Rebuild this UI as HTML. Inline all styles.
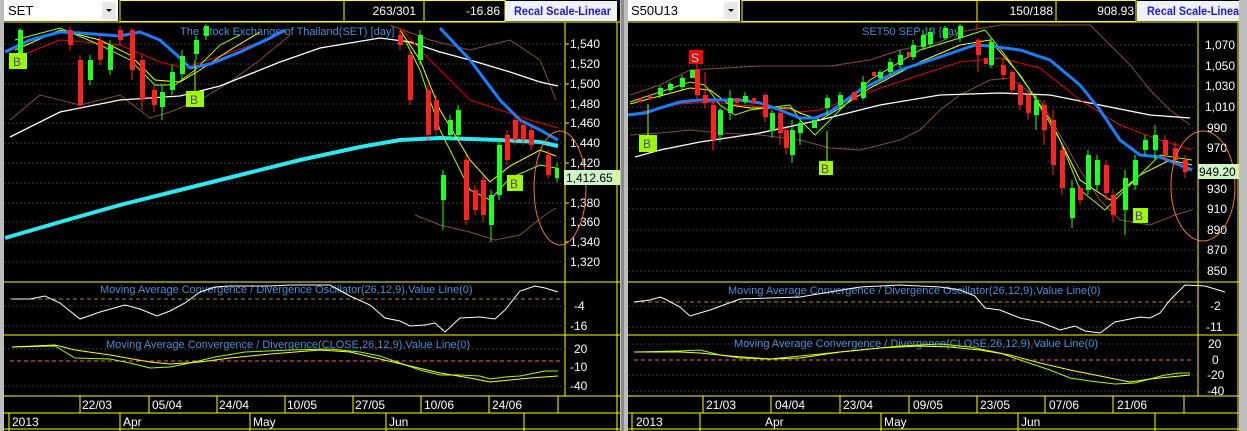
<!DOCTYPE html>
<html><head><meta charset="utf-8"><style>
html,body{margin:0;padding:0;background:#c0c0c0;width:1247px;height:431px;overflow:hidden}
svg{display:block}
text{font-family:"Liberation Sans",sans-serif}
</style></head><body>
<svg width="1247" height="431" viewBox="0 0 1247 431" xmlns="http://www.w3.org/2000/svg">
<rect x="0" y="0" width="1247" height="431" fill="#bdbdbd"/>
<rect x="4" y="0" width="616" height="431" fill="#000"/>
<rect x="628" y="0" width="611" height="431" fill="#000"/>
<rect x="621" y="0" width="3" height="431" fill="#8a8a8a"/>

<!-- ============ LEFT PANEL ============ -->
<g>
<rect x="4" y="0" width="114" height="21" fill="#fff"/>
<text x="8" y="15" font-size="13" fill="#000">SET</text>
<rect x="102" y="2" width="14" height="17" fill="#e8e8e8"/>
<path d="M106 9h6l-3 3z" fill="#000"/>
<rect x="120" y="0.5" width="385" height="21" fill="none" stroke="#ff0" stroke-width="1"/>
<line x1="344" y1="0" x2="344" y2="21" stroke="#ff0"/>
<line x1="424" y1="0" x2="424" y2="21" stroke="#ff0"/>
<text x="416" y="15" font-size="12" fill="#fff" text-anchor="end">263/301</text>
<text x="500" y="15" font-size="12" fill="#fff" text-anchor="end">-16.86</text>
<rect x="505" y="1" width="112" height="20" fill="#f0f0f8"/>
<text x="514" y="15" font-size="12" font-weight="bold" fill="#1a1adf" textLength="97" lengthAdjust="spacingAndGlyphs">Recal Scale-Linear</text>
<line x1="4" y1="22" x2="620" y2="22" stroke="#ff0"/>
<line x1="565" y1="22" x2="565" y2="396" stroke="#ff0"/>
<g stroke="#3a3a3a" stroke-dasharray="2,2">
<line x1="4" y1="44" x2="565" y2="44"/><line x1="4" y1="64" x2="565" y2="64"/><line x1="4" y1="84" x2="565" y2="84"/><line x1="4" y1="104" x2="565" y2="104"/><line x1="4" y1="123" x2="565" y2="123"/><line x1="4" y1="143" x2="565" y2="143"/><line x1="4" y1="163" x2="565" y2="163"/><line x1="4" y1="183" x2="565" y2="183"/><line x1="4" y1="203" x2="565" y2="203"/><line x1="4" y1="222" x2="565" y2="222"/><line x1="4" y1="242" x2="565" y2="242"/><line x1="4" y1="262" x2="565" y2="262"/>
</g>
<g font-size="12" fill="#fff">
<text x="570" y="48">1,540</text><text x="570" y="68">1,520</text><text x="570" y="88">1,500</text><text x="570" y="108">1,480</text><text x="570" y="127">1,460</text><text x="570" y="147">1,440</text><text x="570" y="167">1,420</text><text x="570" y="207">1,380</text><text x="570" y="226">1,360</text><text x="570" y="246">1,340</text><text x="570" y="266">1,320</text>
</g>
<g stroke="#ff0"><line x1="565" y1="44" x2="569" y2="44"/><line x1="565" y1="84" x2="569" y2="84"/><line x1="565" y1="123" x2="569" y2="123"/><line x1="565" y1="163" x2="569" y2="163"/><line x1="565" y1="203" x2="569" y2="203"/><line x1="565" y1="242" x2="569" y2="242"/></g>
<text x="180" y="35" font-size="11" fill="#4a8fd8">The Stock Exchange of Thailand(SET) [day]</text>
<g fill="none">
<polyline stroke="#8b4a3a" points="10,120 40,95 80,105 120,95 150,118 170,112 200,100 230,82 260,60 290,35"/>
<polyline stroke="#8b4a3a" points="390,25 430,40 470,50 510,40 540,60 556,100"/>
<polyline stroke="#8b4a3a" points="415,215 440,225 470,232 495,240 520,235 545,215 556,208"/>
<polyline stroke="#fff" stroke-width="1.3" points="10,137 60,112 120,100 180,96 220,86 280,62 320,48 380,38 410,42 440,52 470,60 510,72 540,82 558,86"/>
<polyline stroke="#2ee8f0" stroke-width="4" points="5,238 60,222 120,205 180,190 240,175 300,160 360,147 400,140 440,138 500,140 540,142 558,146"/>
<polyline stroke="#e00" points="10,60 60,40 120,45 160,62 185,68 220,56 260,42 285,32"/>
<polyline stroke="#e00" points="400,28 430,60 470,100 500,110 530,120 558,128"/>
<polyline stroke="#ff0" points="15,50 60,30 100,40 130,55 155,80 180,82 200,70 230,50 260,32"/>
<polyline stroke="#ff0" points="400,30 420,60 440,110 470,160 490,182 510,166 540,150 556,156"/>
<polyline stroke="#9f0" points="15,40 60,28 100,45 130,60 155,85 175,85 195,70 220,45 240,35"/>
<polyline stroke="#9f0" points="405,40 420,70 440,130 470,190 490,200 510,178 540,165 556,168"/>
<polyline stroke="#1a7fff" stroke-width="3" points="5,52 30,40 60,32 80,33 120,36 140,32 160,40 180,58 190,68 210,64 240,52 270,38 285,30"/>
<polyline stroke="#1a7fff" stroke-width="3" points="440,28 470,60 500,100 520,120 540,130 558,140"/>
</g>
<g stroke-width="1">
<line x1="20" y1="28" x2="20" y2="62" stroke="#2f2"/><rect x="18" y="30" width="5" height="28" fill="#2f2"/>
<line x1="70" y1="26" x2="70" y2="50" stroke="#f22"/><rect x="68" y="30" width="5" height="15" fill="#f22"/>
<line x1="80" y1="55" x2="80" y2="110" stroke="#f22"/><rect x="78" y="60" width="5" height="45" fill="#f22"/>
<line x1="90" y1="55" x2="90" y2="85" stroke="#2f2"/><rect x="88" y="60" width="5" height="20" fill="#2f2"/>
<line x1="100" y1="35" x2="100" y2="65" stroke="#f22"/><rect x="98" y="40" width="5" height="20" fill="#f22"/>
<line x1="110" y1="40" x2="110" y2="75" stroke="#2f2"/><rect x="108" y="45" width="5" height="25" fill="#2f2"/>
<line x1="120" y1="26" x2="120" y2="45" stroke="#f22"/><rect x="118" y="30" width="5" height="10" fill="#f22"/>
<line x1="132" y1="28" x2="132" y2="80" stroke="#f22"/><rect x="130" y="30" width="5" height="40" fill="#f22"/>
<line x1="142" y1="55" x2="142" y2="110" stroke="#f22"/><rect x="140" y="60" width="5" height="40" fill="#f22"/>
<line x1="154" y1="85" x2="154" y2="112" stroke="#f22"/><rect x="152" y="90" width="5" height="15" fill="#f22"/>
<line x1="162" y1="85" x2="162" y2="120" stroke="#2f2"/><rect x="160" y="92" width="5" height="15" fill="#2f2"/>
<line x1="172" y1="65" x2="172" y2="95" stroke="#2f2"/><rect x="170" y="72" width="5" height="18" fill="#2f2"/>
<line x1="182" y1="50" x2="182" y2="80" stroke="#2f2"/><rect x="180" y="56" width="5" height="18" fill="#2f2"/>
<line x1="196" y1="36" x2="196" y2="60" stroke="#2f2"/><rect x="194" y="40" width="5" height="14" fill="#2f2"/>
<line x1="206" y1="24" x2="206" y2="40" stroke="#2f2"/><rect x="204" y="26" width="5" height="10" fill="#2f2"/>
<line x1="400" y1="30" x2="400" y2="50" stroke="#f22"/><rect x="398" y="35" width="5" height="10" fill="#f22"/>
<line x1="410" y1="50" x2="410" y2="105" stroke="#f22"/><rect x="408" y="55" width="5" height="45" fill="#f22"/>
<line x1="420" y1="30" x2="420" y2="65" stroke="#2f2"/><rect x="418" y="35" width="5" height="25" fill="#2f2"/>
<line x1="428" y1="85" x2="428" y2="140" stroke="#f22"/><rect x="426" y="90" width="5" height="45" fill="#f22"/>
<line x1="436" y1="95" x2="436" y2="135" stroke="#f22"/><rect x="434" y="100" width="5" height="30" fill="#f22"/>
<line x1="443" y1="170" x2="443" y2="230" stroke="#2f2"/><rect x="441" y="175" width="5" height="25" fill="#2f2"/>
<line x1="450" y1="115" x2="450" y2="140" stroke="#2f2"/><rect x="448" y="120" width="5" height="15" fill="#2f2"/>
<line x1="458" y1="105" x2="458" y2="140" stroke="#2f2"/><rect x="456" y="110" width="5" height="25" fill="#2f2"/>
<line x1="466" y1="155" x2="466" y2="225" stroke="#f22"/><rect x="464" y="160" width="5" height="60" fill="#f22"/>
<line x1="475" y1="185" x2="475" y2="215" stroke="#f22"/><rect x="473" y="190" width="5" height="20" fill="#f22"/>
<line x1="483" y1="175" x2="483" y2="222" stroke="#f22"/><rect x="481" y="180" width="5" height="35" fill="#f22"/>
<line x1="491" y1="190" x2="491" y2="242" stroke="#2f2"/><rect x="489" y="195" width="5" height="30" fill="#2f2"/>
<line x1="499" y1="140" x2="499" y2="200" stroke="#2f2"/><rect x="497" y="145" width="5" height="50" fill="#2f2"/>
<line x1="507" y1="130" x2="507" y2="165" stroke="#f22"/><rect x="505" y="135" width="5" height="25" fill="#f22"/>
<line x1="515" y1="115" x2="515" y2="145" stroke="#f22"/><rect x="513" y="120" width="5" height="20" fill="#f22"/>
<line x1="523" y1="120" x2="523" y2="145" stroke="#f22"/><rect x="521" y="125" width="5" height="15" fill="#f22"/>
<line x1="531" y1="125" x2="531" y2="150" stroke="#f22"/><rect x="529" y="130" width="5" height="15" fill="#f22"/>
<line x1="548" y1="150" x2="548" y2="178" stroke="#f22"/><rect x="546" y="155" width="5" height="20" fill="#f22"/>
<line x1="557" y1="163" x2="557" y2="182" stroke="#2f2"/><rect x="555" y="168" width="4" height="10" fill="#2f2"/>
</g>
<line x1="20" y1="52" x2="20" y2="56" stroke="#9f0"/>
<rect x="9" y="53" width="18" height="16" fill="#9f0"/><text x="13" y="66" font-size="12" fill="#6a2fc0">B</text>
<line x1="195" y1="60" x2="195" y2="92" stroke="#9f0"/>
<rect x="186" y="91" width="18" height="16" fill="#9f0"/><text x="190" y="104" font-size="12" fill="#6a2fc0">B</text>
<rect x="507" y="175" width="16" height="16" fill="#9f0"/><text x="510" y="188" font-size="12" fill="#6a2fc0">B</text>
<ellipse cx="560" cy="188" rx="26" ry="57" fill="none" stroke="#f07a20"/>
<rect x="564" y="170" width="56" height="15" fill="#ccf5c8"/>
<text x="566" y="182" font-size="12" fill="#000">1,412.65</text>

<line x1="4" y1="282" x2="620" y2="282" stroke="#ff0"/>
<g stroke="#3a3a3a" stroke-dasharray="2,2"><line x1="4" y1="306" x2="565" y2="306"/><line x1="4" y1="326" x2="565" y2="326"/><line x1="4" y1="349" x2="565" y2="349"/><line x1="4" y1="386" x2="565" y2="386"/></g>
<line x1="10" y1="299" x2="560" y2="299" stroke="#a09020" stroke-dasharray="4,3"/>
<text x="100" y="293" font-size="11" fill="#4a8fd8">Moving Average Convergence / Divergence Oscillator(26,12,9),Value Line(0)</text>
<polyline fill="none" stroke="#fff" points="12,299 30,299 45,296 60,303 80,319 100,312 125,305 140,309 157,316 170,311 185,303 200,292 215,287 230,286 250,286 270,286 290,285 310,285 330,285 350,296 370,305 385,318 400,321 410,326 425,325 435,323 445,332 460,318 480,317 495,319 505,310 520,291 535,286 545,288 558,292"/>
<line x1="4" y1="335" x2="620" y2="335" stroke="#ff0"/>
<text x="106" y="348" font-size="11" fill="#4a8fd8">Moving Average Convergence / Divergence(CLOSE,26,12,9),Value Line(0)</text>
<line x1="10" y1="361" x2="560" y2="361" stroke="#ff6060" stroke-dasharray="4,3"/>
<polyline fill="none" stroke="#9f0" points="12,347 55,346 75,358 110,359 130,363 150,368 170,367 190,363 215,357 245,352 290,350 330,349 360,352 380,356 400,363 420,370 440,375 460,375 480,376 490,379 505,377 520,376 530,374 545,371 558,371"/>
<polyline fill="none" stroke="#ff0" points="12,347 55,345 75,350 110,355 150,362 170,364 200,362 230,358 270,354 320,350 350,352 380,359 410,366 440,373 470,378 490,382 510,380 530,378 558,376"/>
<g font-size="12" fill="#fff"><text x="574" y="310">-4</text><text x="570" y="330">-16</text><text x="574" y="353">20</text><text x="570" y="371">-10</text><text x="570" y="390">-40</text></g>
<line x1="4" y1="396" x2="620" y2="396" stroke="#ff0"/>
<line x1="4" y1="413" x2="620" y2="413" stroke="#ff0"/>
<line x1="4" y1="429" x2="620" y2="429" stroke="#ff0"/>
<line x1="617" y1="22" x2="617" y2="431" stroke="#ff0"/>
<g stroke="#ff0"><line x1="80" y1="396" x2="80" y2="413"/><line x1="149" y1="396" x2="149" y2="413"/><line x1="217" y1="396" x2="217" y2="413"/><line x1="285" y1="396" x2="285" y2="413"/><line x1="353" y1="396" x2="353" y2="413"/><line x1="421" y1="396" x2="421" y2="413"/><line x1="489" y1="396" x2="489" y2="413"/><line x1="558" y1="396" x2="558" y2="413"/>
<line x1="9" y1="413" x2="9" y2="431"/><line x1="120" y1="413" x2="120" y2="431"/><line x1="250" y1="413" x2="250" y2="431"/><line x1="386" y1="413" x2="386" y2="431"/><line x1="524" y1="413" x2="524" y2="431"/></g>
<g font-size="12" fill="#fff"><text x="82" y="409">22/03</text><text x="152" y="409">05/04</text><text x="219" y="409">24/04</text><text x="287" y="409">10/05</text><text x="355" y="409">27/05</text><text x="424" y="409">10/06</text><text x="492" y="409">24/06</text>
<text x="12" y="426">2013</text><text x="123" y="426">Apr</text><text x="253" y="426">May</text><text x="389" y="426">Jun</text></g>
</g>

<!-- ============ RIGHT PANEL ============ -->
<g>
<rect x="628" y="0" width="112" height="21" fill="#fff"/>
<text x="631" y="15" font-size="13" fill="#000">S50U13</text>
<rect x="724" y="2" width="14" height="17" fill="#e8e8e8"/>
<path d="M728 9h6l-3 3z" fill="#000"/>
<rect x="742" y="0.5" width="394" height="21" fill="none" stroke="#ff0"/>
<line x1="977" y1="0" x2="977" y2="21" stroke="#ff0"/>
<line x1="1056" y1="0" x2="1056" y2="21" stroke="#ff0"/>
<text x="1053" y="15" font-size="12" fill="#fff" text-anchor="end">150/188</text>
<text x="1134" y="15" font-size="12" fill="#fff" text-anchor="end">908.93</text>
<rect x="1137" y="1" width="102" height="20" fill="#f0f0f8"/>
<text x="1147" y="15" font-size="12" font-weight="bold" fill="#1a1adf" textLength="92" lengthAdjust="spacingAndGlyphs">Recal Scale-Linea</text>
<line x1="628" y1="22" x2="1239" y2="22" stroke="#ff0"/>
<line x1="1198" y1="22" x2="1198" y2="396" stroke="#ff0"/>
<g stroke="#3a3a3a" stroke-dasharray="2,2">
<line x1="628" y1="45" x2="1198" y2="45"/><line x1="628" y1="66" x2="1198" y2="66"/><line x1="628" y1="86" x2="1198" y2="86"/><line x1="628" y1="107" x2="1198" y2="107"/><line x1="628" y1="128" x2="1198" y2="128"/><line x1="628" y1="148" x2="1198" y2="148"/><line x1="628" y1="168" x2="1198" y2="168"/><line x1="628" y1="189" x2="1198" y2="189"/><line x1="628" y1="209" x2="1198" y2="209"/><line x1="628" y1="230" x2="1198" y2="230"/><line x1="628" y1="250" x2="1198" y2="250"/><line x1="628" y1="271" x2="1198" y2="271"/>
</g>
<g font-size="12" fill="#fff">
<text x="1205" y="49">1,070</text><text x="1205" y="70">1,050</text><text x="1205" y="90">1,030</text><text x="1205" y="111">1,010</text><text x="1207" y="132">990</text><text x="1207" y="152">970</text><text x="1207" y="193">930</text><text x="1207" y="213">910</text><text x="1207" y="234">890</text><text x="1207" y="254">870</text><text x="1207" y="275">850</text>
</g>
<text x="862" y="35" font-size="11" fill="#4a8fd8">SET50 SEP 13  [day]</text>
<g fill="none">
<polyline stroke="#8b4a3a" points="630,95 660,85 690,70 760,66 830,66 870,60 900,50 940,42 960,32 1000,25 1090,25 1110,45 1130,65 1150,90 1170,110 1190,125"/>
<polyline stroke="#8b4a3a" points="630,135 660,133 690,130 720,133 760,135 800,140 830,148 860,150 900,140 920,130 940,110 960,95 990,80 1010,78 1040,100 1060,135 1080,170 1100,200 1120,220 1150,225 1175,215 1192,210"/>
<polyline stroke="#fff" stroke-width="1.3" points="635,157 660,150 700,142 760,133 820,120 880,105 940,95 1000,93 1050,95 1100,105 1150,115 1190,118"/>
<polyline stroke="#e00" points="628,115 650,110 680,104 710,102 740,105 780,108 800,112 820,110 860,95 920,75 960,62 1000,58 1040,68 1080,100 1120,125 1160,140 1192,150"/>
<polyline stroke="#ff0" points="630,104 660,96 690,88 710,90 730,105 750,108 790,108 800,113 820,120 840,108 870,88 920,62 960,45 990,40 1020,75 1050,120 1080,180 1110,200 1140,175 1170,160 1192,165"/>
<polyline stroke="#9f0" points="630,102 660,92 690,82 705,85 720,105 735,115 750,110 790,105 800,120 815,135 835,115 870,80 920,50 960,38 985,30 1005,55 1030,90 1060,140 1080,190 1105,210 1130,185 1160,155 1192,160"/>
<polyline stroke="#1a7fff" stroke-width="3" points="628,115 645,113 660,108 680,102 700,100 740,100 760,103 780,110 800,118 815,118 830,112 860,90 900,70 940,57 975,45 990,46 1020,50 1050,60 1080,85 1100,110 1120,140 1140,155 1160,157 1180,165 1192,170"/>
</g>
<g>
<rect x="638" y="98" width="4" height="4" fill="#f22"/>
<rect x="648" y="95" width="4" height="4" fill="#f22"/>
<line x1="660" y1="86" x2="660" y2="98" stroke="#2f2"/><rect x="658" y="88" width="5" height="7" fill="#2f2"/>
<line x1="670" y1="82" x2="670" y2="92" stroke="#2f2"/><rect x="668" y="84" width="5" height="6" fill="#2f2"/>
<line x1="682" y1="75" x2="682" y2="90" stroke="#2f2"/><rect x="680" y="78" width="5" height="9" fill="#2f2"/>
<rect x="690" y="70" width="5" height="8" fill="#2f2"/>
<line x1="697" y1="66" x2="697" y2="100" stroke="#f22"/><rect x="695" y="70" width="5" height="25" fill="#f22"/>
<line x1="705" y1="72" x2="705" y2="108" stroke="#f22"/><rect x="703" y="95" width="5" height="8" fill="#f22"/>
<line x1="713" y1="100" x2="713" y2="150" stroke="#f22"/><rect x="711" y="105" width="5" height="35" fill="#f22"/>
<line x1="720" y1="108" x2="720" y2="142" stroke="#2f2"/><rect x="718" y="110" width="5" height="25" fill="#2f2"/>
<line x1="730" y1="90" x2="730" y2="120" stroke="#2f2"/><rect x="728" y="98" width="5" height="15" fill="#2f2"/>
<rect x="735" y="98" width="4" height="5" fill="#f22"/>
<line x1="745" y1="92" x2="745" y2="104" stroke="#2f2"/><rect x="743" y="96" width="5" height="6" fill="#2f2"/>
<rect x="752" y="98" width="4" height="5" fill="#f22"/>
<line x1="765" y1="93" x2="765" y2="122" stroke="#f22"/><rect x="763" y="95" width="5" height="22" fill="#f22"/>
<line x1="772" y1="110" x2="772" y2="138" stroke="#2f2"/><rect x="770" y="113" width="5" height="18" fill="#2f2"/>
<line x1="780" y1="110" x2="780" y2="145" stroke="#f22"/><rect x="778" y="113" width="5" height="20" fill="#f22"/>
<line x1="786" y1="128" x2="786" y2="155" stroke="#f22"/><rect x="784" y="130" width="5" height="18" fill="#f22"/>
<line x1="792" y1="120" x2="792" y2="163" stroke="#2f2"/><rect x="790" y="130" width="5" height="25" fill="#2f2"/>
<line x1="800" y1="118" x2="800" y2="145" stroke="#2f2"/><rect x="798" y="123" width="5" height="10" fill="#2f2"/>
<rect x="812" y="120" width="5" height="8" fill="#2f2"/>
<line x1="827" y1="95" x2="827" y2="115" stroke="#2f2"/><rect x="825" y="98" width="5" height="10" fill="#2f2"/>
<line x1="840" y1="92" x2="840" y2="110" stroke="#2f2"/><rect x="838" y="95" width="5" height="10" fill="#2f2"/>
<rect x="852" y="92" width="5" height="8" fill="#f22"/>
<line x1="863" y1="76" x2="863" y2="100" stroke="#2f2"/><rect x="861" y="82" width="5" height="16" fill="#2f2"/>
<rect x="872" y="72" width="4" height="4" fill="#f22"/>
<line x1="880" y1="70" x2="880" y2="80" stroke="#2f2"/><rect x="878" y="72" width="5" height="6" fill="#2f2"/>
<line x1="890" y1="58" x2="890" y2="75" stroke="#2f2"/><rect x="888" y="62" width="5" height="10" fill="#2f2"/>
<line x1="900" y1="50" x2="900" y2="68" stroke="#2f2"/><rect x="898" y="55" width="5" height="10" fill="#2f2"/>
<rect x="907" y="52" width="4" height="5" fill="#f22"/>
<line x1="913" y1="40" x2="913" y2="60" stroke="#2f2"/><rect x="911" y="45" width="5" height="12" fill="#2f2"/>
<line x1="923" y1="30" x2="923" y2="50" stroke="#2f2"/><rect x="921" y="35" width="5" height="12" fill="#2f2"/>
<line x1="930" y1="28" x2="930" y2="48" stroke="#2f2"/><rect x="928" y="32" width="5" height="12" fill="#2f2"/>
<line x1="945" y1="26" x2="945" y2="40" stroke="#2f2"/><rect x="943" y="28" width="5" height="10" fill="#2f2"/>
<line x1="960" y1="24" x2="960" y2="42" stroke="#2f2"/><rect x="958" y="26" width="5" height="12" fill="#2f2"/>
<line x1="977" y1="24" x2="977" y2="30" stroke="#f22"/>
<line x1="978" y1="38" x2="978" y2="72" stroke="#f22"/><rect x="976" y="40" width="5" height="15" fill="#f22"/>
<rect x="984" y="58" width="4" height="6" fill="#f22"/>
<line x1="991" y1="38" x2="991" y2="68" stroke="#2f2"/><rect x="989" y="42" width="5" height="23" fill="#2f2"/>
<line x1="1003" y1="58" x2="1003" y2="80" stroke="#f22"/><rect x="1001" y="65" width="5" height="10" fill="#f22"/>
<line x1="1012" y1="70" x2="1012" y2="95" stroke="#f22"/><rect x="1010" y="72" width="5" height="18" fill="#f22"/>
<line x1="1020" y1="82" x2="1020" y2="110" stroke="#f22"/><rect x="1018" y="85" width="5" height="20" fill="#f22"/>
<line x1="1028" y1="90" x2="1028" y2="120" stroke="#f22"/><rect x="1026" y="95" width="5" height="18" fill="#f22"/>
<line x1="1036" y1="95" x2="1036" y2="130" stroke="#2f2"/><rect x="1034" y="100" width="5" height="15" fill="#2f2"/>
<line x1="1044" y1="100" x2="1044" y2="145" stroke="#f22"/><rect x="1042" y="105" width="5" height="25" fill="#f22"/>
<line x1="1053" y1="110" x2="1053" y2="175" stroke="#f22"/><rect x="1051" y="120" width="5" height="45" fill="#f22"/>
<line x1="1062" y1="145" x2="1062" y2="195" stroke="#f22"/><rect x="1060" y="150" width="5" height="38" fill="#f22"/>
<line x1="1072" y1="180" x2="1072" y2="228" stroke="#2f2"/><rect x="1070" y="188" width="5" height="30" fill="#2f2"/>
<line x1="1080" y1="185" x2="1080" y2="205" stroke="#f22"/><rect x="1078" y="188" width="5" height="12" fill="#f22"/>
<line x1="1088" y1="150" x2="1088" y2="195" stroke="#2f2"/><rect x="1086" y="155" width="5" height="35" fill="#2f2"/>
<line x1="1097" y1="155" x2="1097" y2="190" stroke="#2f2"/><rect x="1095" y="160" width="5" height="25" fill="#2f2"/>
<line x1="1106" y1="160" x2="1106" y2="200" stroke="#f22"/><rect x="1104" y="165" width="5" height="28" fill="#f22"/>
<line x1="1113" y1="190" x2="1113" y2="222" stroke="#f22"/><rect x="1111" y="195" width="5" height="20" fill="#f22"/>
<line x1="1125" y1="170" x2="1125" y2="235" stroke="#2f2"/><rect x="1123" y="178" width="5" height="32" fill="#2f2"/>
<line x1="1135" y1="155" x2="1135" y2="190" stroke="#2f2"/><rect x="1133" y="160" width="5" height="25" fill="#2f2"/>
<line x1="1145" y1="135" x2="1145" y2="155" stroke="#2f2"/><rect x="1143" y="140" width="5" height="10" fill="#2f2"/>
<line x1="1155" y1="125" x2="1155" y2="160" stroke="#2f2"/><rect x="1153" y="135" width="5" height="15" fill="#2f2"/>
<line x1="1165" y1="135" x2="1165" y2="162" stroke="#f22"/><rect x="1163" y="140" width="5" height="15" fill="#f22"/>
<line x1="1175" y1="142" x2="1175" y2="165" stroke="#f22"/><rect x="1173" y="148" width="5" height="12" fill="#f22"/>
<line x1="1185" y1="155" x2="1185" y2="178" stroke="#f22"/><rect x="1183" y="160" width="5" height="12" fill="#f22"/>
</g>
<rect x="689" y="50" width="14" height="14" fill="#f00"/><text x="691" y="62" font-size="12" fill="#3ff">S</text>
<line x1="697" y1="64" x2="697" y2="80" stroke="#f22"/>
<line x1="648" y1="104" x2="648" y2="135" stroke="#9f0"/>
<rect x="639" y="135" width="18" height="17" fill="#9f0"/><text x="643" y="148" font-size="12" fill="#6a2fc0">B</text>
<line x1="827" y1="131" x2="827" y2="161" stroke="#9f0"/>
<rect x="819" y="161" width="14" height="14" fill="#9f0"/><text x="821" y="173" font-size="12" fill="#6a2fc0">B</text>
<rect x="1133" y="208" width="15" height="15" fill="#9f0"/><text x="1135" y="220" font-size="12" fill="#6a2fc0">B</text>
<ellipse cx="1203" cy="186" rx="32" ry="55" fill="none" stroke="#f07a20"/>
<rect x="1198" y="164" width="41" height="15" fill="#ccf5c8"/>
<text x="1199" y="176" font-size="12" fill="#000">949.20</text>

<line x1="628" y1="282" x2="1239" y2="282" stroke="#ff0"/>
<g stroke="#3a3a3a" stroke-dasharray="2,2"><line x1="628" y1="306" x2="1198" y2="306"/><line x1="628" y1="327" x2="1198" y2="327"/><line x1="628" y1="344" x2="1198" y2="344"/><line x1="628" y1="375" x2="1198" y2="375"/><line x1="628" y1="391" x2="1198" y2="391"/></g>
<line x1="634" y1="302" x2="1192" y2="302" stroke="#a09020" stroke-dasharray="4,3"/>
<text x="728" y="294" font-size="11" fill="#4a8fd8">Moving Average Convergence / Divergence Oscillator(26,12,9),Value Line(0)</text>
<polyline fill="none" stroke="#fff" points="634,302 650,300 660,297 665,299 680,307 690,316 710,310 740,299 770,298 800,297 830,292 860,287 900,285 940,287 960,290 975,296 985,308 1000,310 1020,318 1040,322 1060,330 1075,326 1085,331 1100,333 1115,322 1125,320 1140,317 1150,318 1160,313 1170,300 1185,285 1205,286 1225,292"/>
<line x1="1198" y1="282" x2="1198" y2="396" stroke="#ff0"/>
<line x1="628" y1="335" x2="1239" y2="335" stroke="#ff0"/>
<text x="734" y="347" font-size="11" fill="#4a8fd8">Moving Average Convergence / Divergence(CLOSE,26,12,9),Value Line(0)</text>
<line x1="634" y1="360" x2="1192" y2="360" stroke="#ff6060" stroke-dasharray="4,3"/>
<polyline fill="none" stroke="#9f0" points="634,352 680,351 700,350 720,355 740,358 770,359 790,357 820,354 860,350 900,346 940,344 970,347 1000,353 1020,360 1050,370 1070,378 1090,381 1115,384 1135,383 1150,379 1165,375 1180,373 1190,373"/>
<polyline fill="none" stroke="#ff0" points="634,352 680,352 700,353 730,356 770,359 800,358 840,352 880,348 920,346 950,347 980,350 1010,355 1040,363 1070,370 1100,376 1130,382 1150,379 1170,377 1190,375"/>
<g font-size="12" fill="#fff"><text x="1210" y="310">-2</text><text x="1206" y="331">-11</text><text x="1208" y="348">20</text><text x="1212" y="364">0</text><text x="1207" y="379">-20</text><text x="1207" y="395">-40</text></g>
<line x1="628" y1="396" x2="1239" y2="396" stroke="#ff0"/>
<line x1="628" y1="413" x2="1239" y2="413" stroke="#ff0"/>
<line x1="628" y1="429" x2="1239" y2="429" stroke="#ff0"/>
<line x1="1238" y1="22" x2="1238" y2="431" stroke="#ff0"/>
<g stroke="#ff0"><line x1="703" y1="396" x2="703" y2="413"/><line x1="771" y1="396" x2="771" y2="413"/><line x1="840" y1="396" x2="840" y2="413"/><line x1="909" y1="396" x2="909" y2="413"/><line x1="977" y1="396" x2="977" y2="413"/><line x1="1045" y1="396" x2="1045" y2="413"/><line x1="1113" y1="396" x2="1113" y2="413"/><line x1="1184" y1="396" x2="1184" y2="413"/>
<line x1="632" y1="413" x2="632" y2="431"/><line x1="700" y1="413" x2="700" y2="431"/><line x1="881" y1="413" x2="881" y2="431"/><line x1="1018" y1="413" x2="1018" y2="431"/><line x1="1155" y1="413" x2="1155" y2="431"/></g>
<g font-size="12" fill="#fff"><text x="706" y="409">21/03</text><text x="775" y="409">04/04</text><text x="843" y="409">23/04</text><text x="913" y="409">09/05</text><text x="980" y="409">23/05</text><text x="1049" y="409">07/06</text><text x="1117" y="409">21/06</text>
<text x="636" y="426">2013</text><text x="765" y="426">Apr</text><text x="884" y="426">May</text><text x="1021" y="426">Jun</text></g>
</g>
</svg>
</body></html>
